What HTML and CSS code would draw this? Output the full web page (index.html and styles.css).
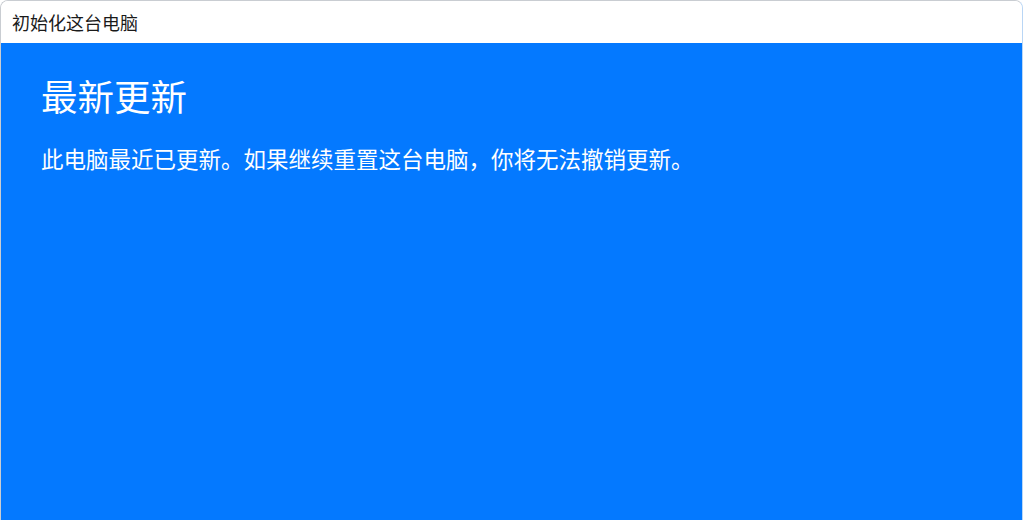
FILE: index.html
```html
<!DOCTYPE html>
<html lang="zh-CN">
<head>
    <meta charset="UTF-8">
    <meta name="viewport" content="width=device-width, initial-scale=1.0">
    <title>初始化这台电脑</title>
    <link rel="stylesheet" href="styles.css">
</head>
<body>
    <div class="window">
        <div class="title-bar">初始化这台电脑</div>
        <div class="content">
            <h1 class="heading">最新更新</h1>
            <p class="message">此电脑最近已更新。如果继续重置这台电脑，你将无法撤销更新。</p>
        </div>
    </div>
</body>
</html>
```

FILE: styles.css
```css
html, body {
    height: 100%;
}
body {
    margin: 0;
    font-family: "Noto Sans CJK SC", "Noto Sans", sans-serif;
    background: #ffffff;
    overflow: hidden;
}
.window {
    height: 100%;
    box-sizing: border-box;
    margin-right: 2px;
    border: 1px solid #c9cdd2;
    border-right-color: #b9d6f5;
    border-bottom: none;
    border-radius: 8px 8px 0 0;
    display: flex;
    flex-direction: column;
    overflow: hidden;
}
.title-bar {
    height: 42px;
    flex: none;
    display: flex;
    align-items: center;
    padding-left: 11px;
    font-size: 18px;
    color: #1a1a1a;
    background: #ffffff;
}
.content {
    flex: 1;
    background: #0479ff;
    color: #ffffff;
    padding: 27px 40px;
}
.heading {
    margin: 0;
    font-size: 36.5px;
    font-weight: normal;
    line-height: 52px;
}
.message {
    margin: 20px 0 0;
    font-size: 22.5px;
    line-height: 32px;
}
```
